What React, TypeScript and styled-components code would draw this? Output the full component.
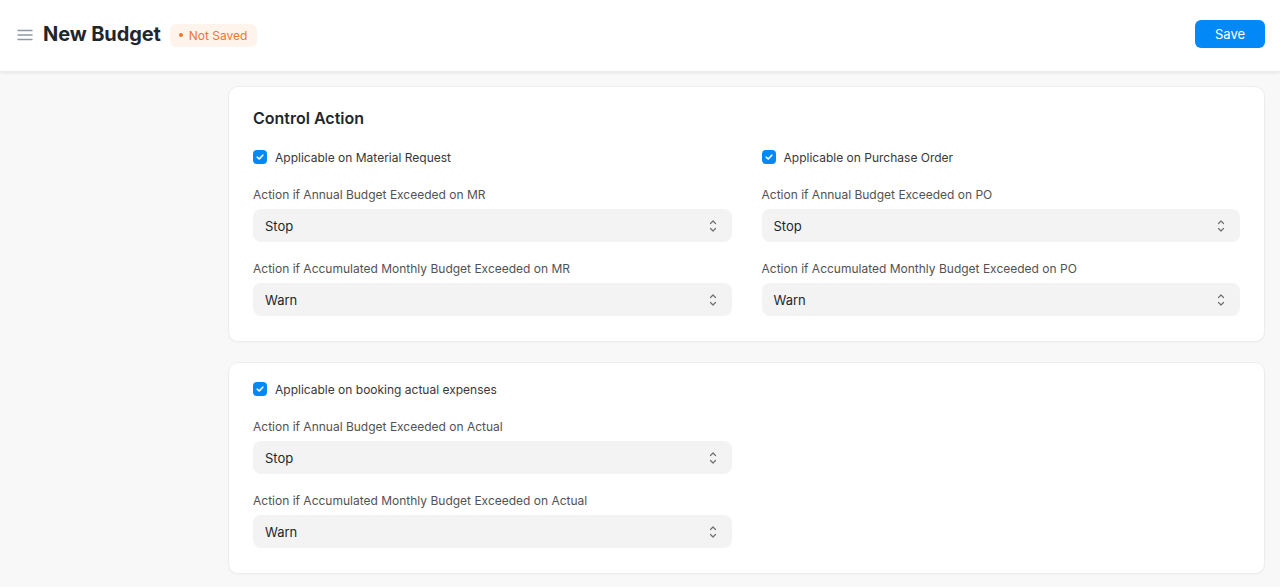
import React from "react";
import styled, { createGlobalStyle } from "styled-components";

const Global = createGlobalStyle`
  html, body { margin: 0; padding: 0; }
  body {
    background: #f8f8f8;
    font-family: Inter, "Noto Sans", sans-serif;
    color: #1f272e;
    -webkit-font-smoothing: antialiased;
  }
  * { box-sizing: border-box; }
`;

const Navbar = styled.header`
  height: 72px;
  background: #fff;
  display: flex;
  align-items: center;
  justify-content: space-between;
  padding: 0 15px 0 17px;
  box-shadow: 0 1px 3px rgba(0, 0, 0, 0.08);
  border-bottom: 1px solid #ececec;
`;

const TitleGroup = styled.div`
  display: flex;
  align-items: center;
  margin-top: -3px;
`;

const MenuIcon = styled.svg`
  width: 16px;
  height: 16px;
  margin-right: 10px;
  margin-top: 1px;
`;

const Title = styled.h1`
  margin: 0;
  font-size: 20px;
  font-weight: 700;
  color: #1f272e;
  letter-spacing: -0.1px;
`;

const Badge = styled.span`
  margin-left: 9px;
  height: 23px;
  padding: 0 10px 0 9px;
  border-radius: 6px;
  background: #fff4ec;
  color: #f0762f;
  font-size: 12px;
  display: inline-flex;
  align-items: center;
  gap: 6px;
  margin-top: 2px;
`;

const Dot = styled.span`
  width: 4px;
  height: 4px;
  border-radius: 50%;
  background: #f0762f;
`;

const SaveButton = styled.button`
  width: 70px;
  height: 28px;
  border: none;
  border-radius: 6px;
  background: #0289f7;
  color: #fff;
  font-family: Inter, sans-serif;
  font-size: 13px;
  cursor: pointer;
  margin-top: -3px;
`;

const Main = styled.main`
  padding: 14px 15px 12px 228px;
  display: flex;
  flex-direction: column;
  gap: 20px;
`;

const Card = styled.section<{ $top: number }>`
  background: #fff;
  border: 1px solid #ebeef0;
  border-radius: 10px;
  padding: ${(p) => p.$top}px 24px 25px;
  box-shadow: 0 1px 2px rgba(0, 0, 0, 0.03);
`;

const SectionTitle = styled.h2`
  margin: 0 0 17px;
  font-size: 16px;
  line-height: 24px;
  font-weight: 600;
  color: #1f272e;
`;

const Columns = styled.div`
  display: grid;
  grid-template-columns: 1fr 1fr;
  column-gap: 30px;
`;

const Column = styled.div`
  display: flex;
  flex-direction: column;
`;

const CheckRow = styled.label`
  display: flex;
  align-items: center;
  gap: 8px;
  height: 20px;
  font-size: 12px;
  color: #383838;
  margin-bottom: 18px;
`;

const Box = styled.span`
  width: 14px;
  height: 14px;
  border-radius: 4px;
  background: #0289f7;
  display: inline-flex;
  align-items: center;
  justify-content: center;
`;

const Field = styled.div`
  display: flex;
  flex-direction: column;
  gap: 4px;
  & + & {
    margin-top: 17px;
  }
`;

const FieldLabel = styled.div`
  font-size: 12px;
  line-height: 20px;
  color: #525252;
`;

const Select = styled.div`
  height: 33px;
  border-radius: 8px;
  background: #f3f3f3;
  display: flex;
  align-items: center;
  justify-content: space-between;
  padding: 0 14px 0 12px;
  font-size: 13px;
  color: #1f272e;
`;

const Check = () => (
  <Box>
    <svg width="10" height="10" viewBox="0 0 10 10">
      <path d="M2.2 5.2 L4.2 7 L7.8 3.2" fill="none" stroke="#fff" strokeWidth="1.6" strokeLinecap="round" strokeLinejoin="round" />
    </svg>
  </Box>
);

const Arrows = () => (
  <svg width="10" height="14" viewBox="0 0 10 14">
    <path d="M2.5 4.5 L5 2 L7.5 4.5" fill="none" stroke="#6f6f6f" strokeWidth="1.2" strokeLinecap="round" strokeLinejoin="round" />
    <path d="M2.5 9.5 L5 12 L7.5 9.5" fill="none" stroke="#6f6f6f" strokeWidth="1.2" strokeLinecap="round" strokeLinejoin="round" />
  </svg>
);

const SelectField = ({ label, value }: { label: string; value: string }) => (
  <Field>
    <FieldLabel>{label}</FieldLabel>
    <Select>
      <span>{value}</span>
      <Arrows />
    </Select>
  </Field>
);

const Group = ({ check, code }: { check: string; code: string }) => (
  <Column>
    <CheckRow>
      <Check />
      {check}
    </CheckRow>
    <SelectField label={`Action if Annual Budget Exceeded on ${code}`} value="Stop" />
    <SelectField label={`Action if Accumulated Monthly Budget Exceeded on ${code}`} value="Warn" />
  </Column>
);

export default function App() {
  return (
    <>
      <Global />
      <Navbar>
        <TitleGroup>
          <MenuIcon viewBox="0 0 16 16">
            <path d="M1 3.5h14M1 8h14M1 12.5h14" stroke="#8d99a6" strokeWidth="1.4" strokeLinecap="round" />
          </MenuIcon>
          <Title>New Budget</Title>
          <Badge>
            <Dot />
            Not Saved
          </Badge>
        </TitleGroup>
        <SaveButton>Save</SaveButton>
      </Navbar>
      <Main>
        <Card $top={19}>
          <SectionTitle>Control Action</SectionTitle>
          <Columns>
            <Group check="Applicable on Material Request" code="MR" />
            <Group check="Applicable on Purchase Order" code="PO" />
          </Columns>
        </Card>
        <Card $top={16}>
          <Columns>
            <Group check="Applicable on booking actual expenses" code="Actual" />
            <div />
          </Columns>
        </Card>
      </Main>
    </>
  );
}
